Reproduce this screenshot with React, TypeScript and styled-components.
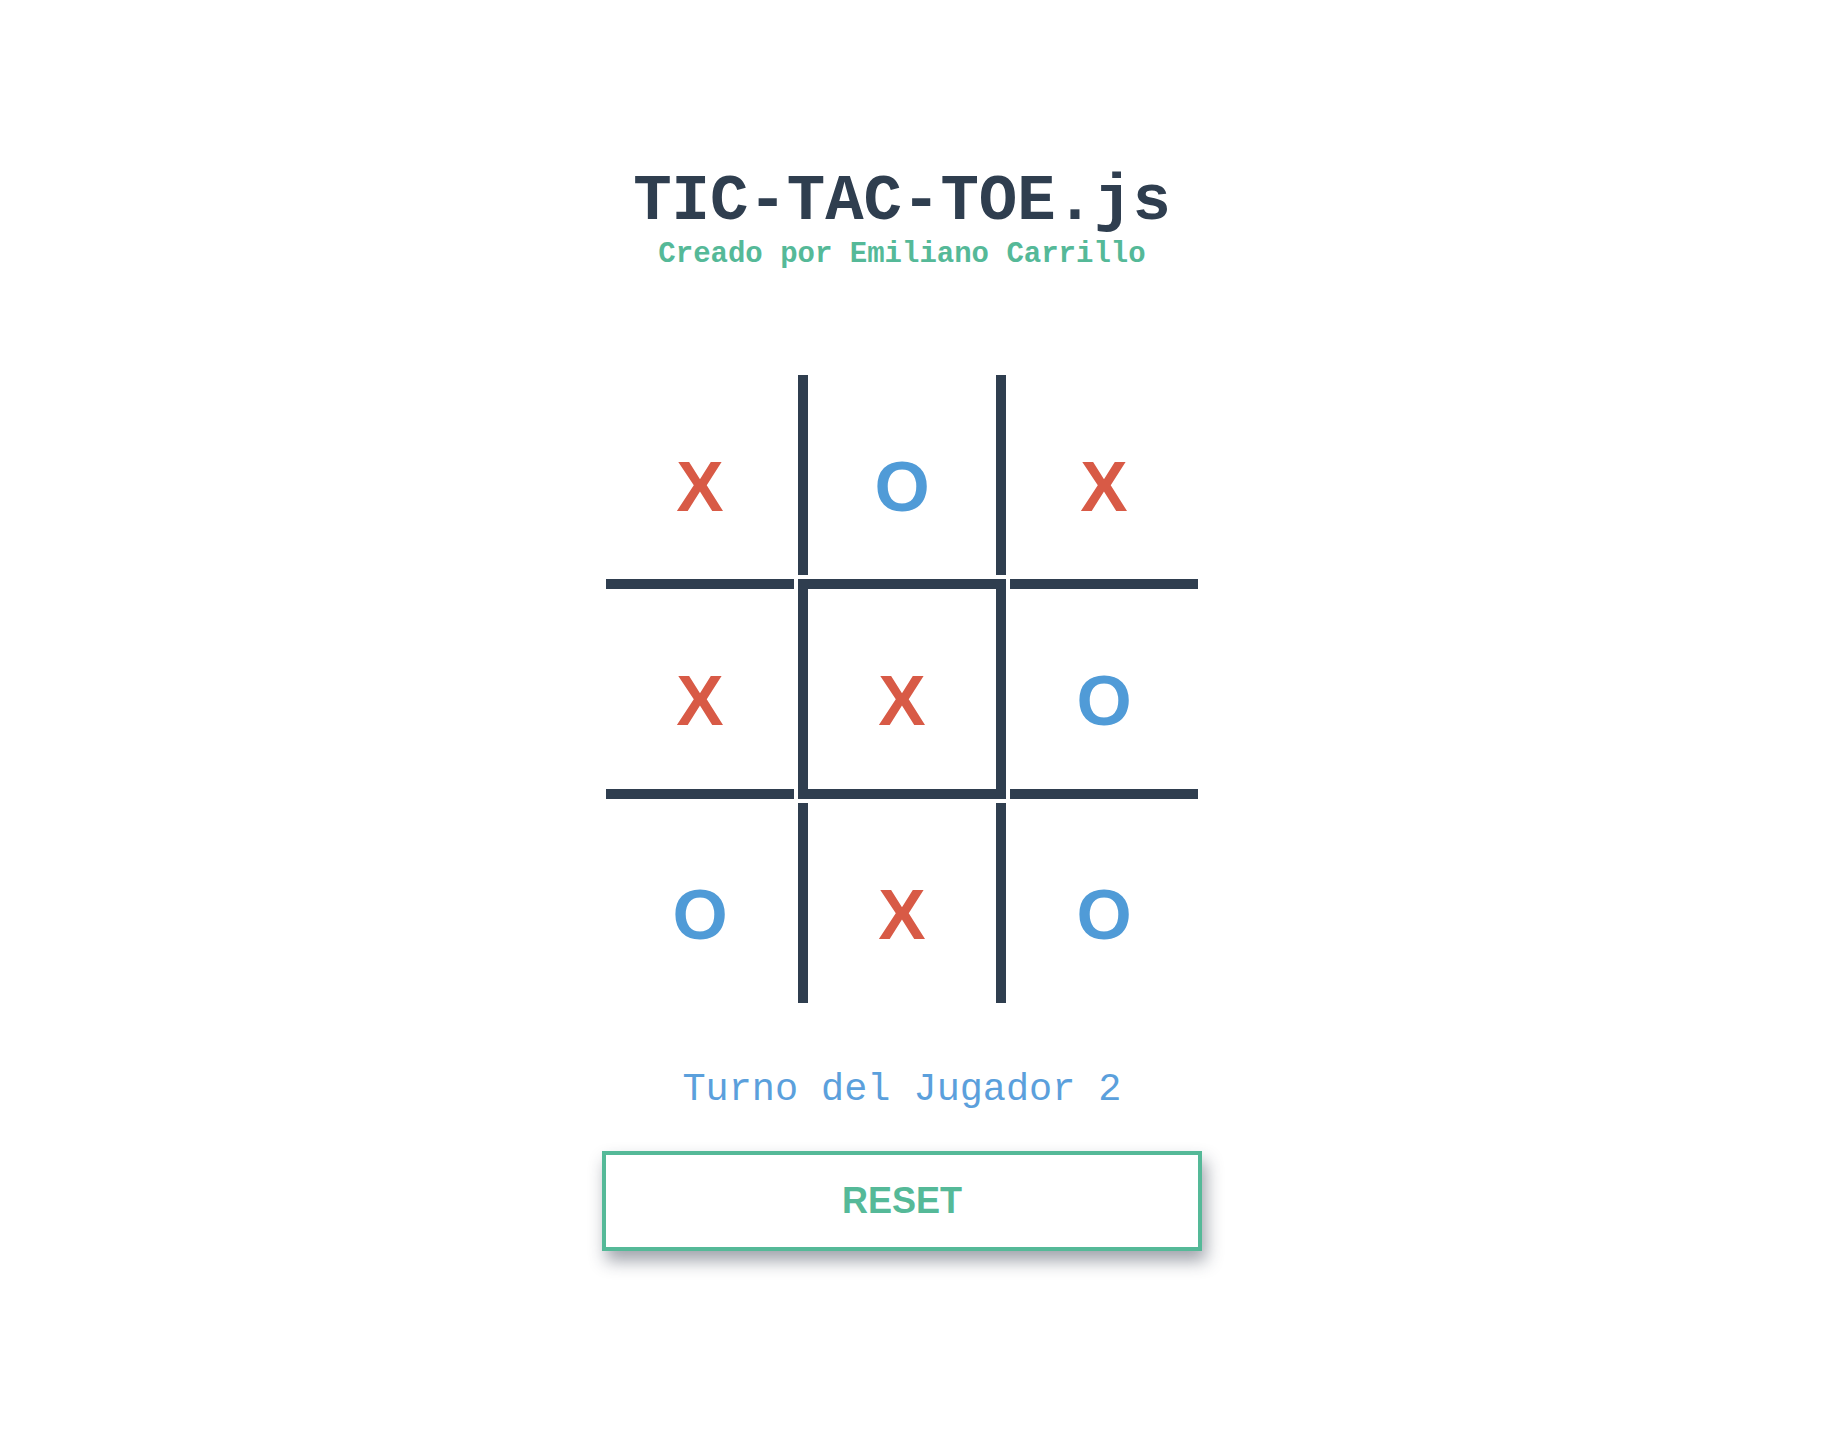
import React from "react";
import styled, { createGlobalStyle } from "styled-components";

const GlobalStyle = createGlobalStyle`
  html, body { margin: 0; padding: 0; background: #ffffff; }
  * { box-sizing: border-box; }
`;

const Page = styled.main`
  width: 1804px;
  min-height: 1448px;
  display: flex;
  flex-direction: column;
  align-items: center;
  padding-top: 164px;
  padding-bottom: 120px;
`;

const Title = styled.h1`
  margin: 0;
  font-family: "Liberation Mono", "Courier New", monospace;
  font-weight: 700;
  font-size: 64px;
  line-height: 76px;
  color: #2f3e4f;
`;

const Subtitle = styled.h2`
  margin: -2px 0 0;
  font-family: "Liberation Mono", "Courier New", monospace;
  font-weight: 700;
  font-size: 29px;
  line-height: 34px;
  color: #55b998;
`;

const Board = styled.div`
  margin-top: 103px;
  display: grid;
  grid-template-columns: 188px 208px 188px;
  grid-template-rows: 200px 220px 200px;
  gap: 4px;
`;

const Cell = styled.div<{ $top?: boolean; $bottom?: boolean; $left?: boolean; $right?: boolean }>`
  display: flex;
  align-items: center;
  justify-content: center;
  padding-top: 22px;
  border-color: #2f3e4f;
  border-style: solid;
  border-width: ${(p) =>
    `${p.$top ? 10 : 0}px ${p.$right ? 10 : 0}px ${p.$bottom ? 10 : 0}px ${p.$left ? 10 : 0}px`};
`;

const Mark = styled.span<{ $player: "X" | "O" }>`
  font-family: "Liberation Sans", Arial, sans-serif;
  font-weight: 700;
  font-size: 71px;
  line-height: 1;
  color: ${(p) => (p.$player === "X" ? "#d85a46" : "#509bd7")};
`;

const Status = styled.p`
  margin: 65px 0 0;
  font-family: "Liberation Mono", "Courier New", monospace;
  font-weight: 400;
  font-size: 38.5px;
  line-height: 44px;
  color: #5ba0dc;
`;

const ResetButton = styled.button`
  margin-top: 39px;
  width: 600px;
  height: 100px;
  border: 4px solid #55b998;
  background: #ffffff;
  box-shadow: 4px 10px 16px rgba(30, 40, 60, 0.42);
  font-family: "Liberation Sans", Arial, sans-serif;
  font-weight: 700;
  font-size: 36px;
  color: #55b998;
  cursor: pointer;
`;

type Borders = { $top?: boolean; $bottom?: boolean; $left?: boolean; $right?: boolean };

const cells: { v: "X" | "O"; b: Borders }[] = [
  { v: "X", b: {} },
  { v: "O", b: { $left: true, $right: true } },
  { v: "X", b: {} },
  { v: "X", b: { $top: true, $bottom: true } },
  { v: "X", b: { $top: true, $bottom: true, $left: true, $right: true } },
  { v: "O", b: { $top: true, $bottom: true } },
  { v: "O", b: {} },
  { v: "X", b: { $left: true, $right: true } },
  { v: "O", b: {} },
];

export default function App() {
  return (
    <>
      <GlobalStyle />
      <Page>
        <Title>TIC-TAC-TOE.js</Title>
        <Subtitle>Creado por Emiliano Carrillo</Subtitle>
        <Board>
          {cells.map((c, i) => (
            <Cell key={i} {...c.b}>
              <Mark $player={c.v}>{c.v}</Mark>
            </Cell>
          ))}
        </Board>
        <Status>Turno del Jugador 2</Status>
        <ResetButton>RESET</ResetButton>
      </Page>
    </>
  );
}
